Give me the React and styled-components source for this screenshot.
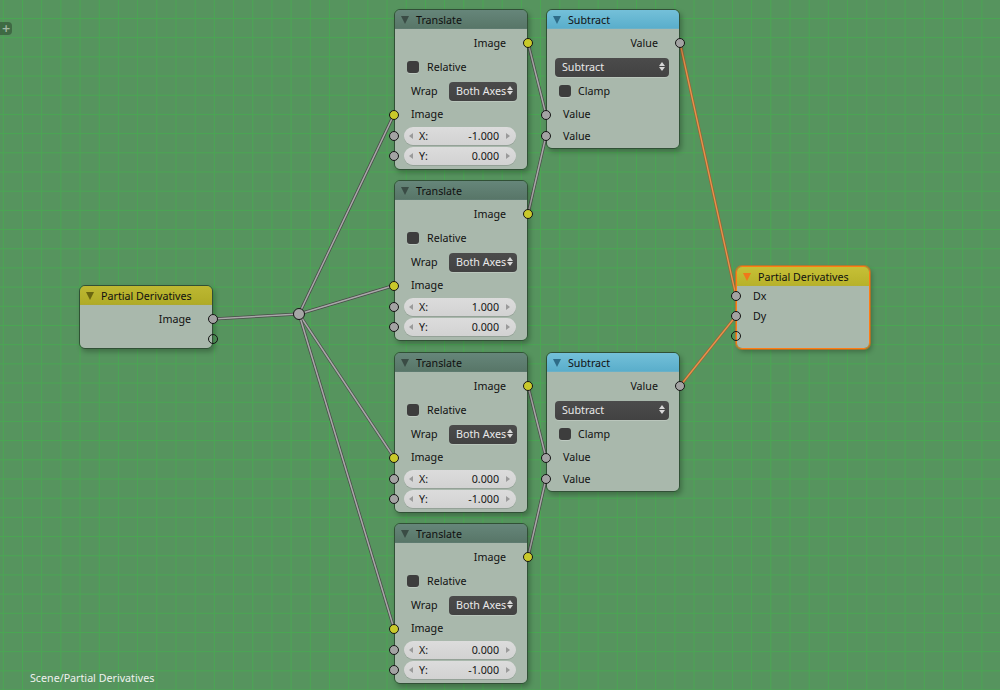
import React from "react";
import styled, { createGlobalStyle } from "styled-components";

const GlobalStyle = createGlobalStyle`
  html, body {
    margin: 0;
    padding: 0;
    background: #579560;
  }
  body {
    font-family: "Noto Sans", "DejaVu Sans", sans-serif;
  }
`;

const Canvas = styled.div`
  position: relative;
  width: 1000px;
  height: 690px;
  overflow: hidden;
  background-color: #56945e;
  background-image: linear-gradient(to right, #4aa653 1px, transparent 1px),
    linear-gradient(to bottom, #4aa653 1px, transparent 1px);
  background-size: 19.2px 19.2px;
  background-position: 22px 18px;
  font-family: "Noto Sans", "DejaVu Sans", sans-serif;
  font-size: 10.7px;
  color: #111;
`;

const Wires = styled.svg`
  position: absolute;
  left: 0;
  top: 0;
`;

const AddTab = styled.div`
  position: absolute;
  left: 0;
  top: 22px;
  width: 12px;
  height: 13px;
  border-radius: 0 4px 4px 0;
  background: rgba(45, 70, 48, 0.55);
  color: #a3b8a5;
  font-family: "DejaVu Sans", sans-serif;
  font-size: 11px;
  font-weight: bold;
  line-height: 13px;
  text-align: center;
`;

const SceneLabel = styled.div`
  position: absolute;
  left: 30px;
  top: 671px;
  color: #eef2ee;
`;

/* ---------- node parts ---------- */

const tones = {
  translate: { bg: "linear-gradient(#66867a, #587668)", tri: "#3a4c45" },
  subtract: { bg: "linear-gradient(#74c0d9, #5aaecb)", tri: "#2e6c88" },
  output: { bg: "linear-gradient(#bdb832, #b0ab26)", tri: "#6a6610" },
  active: { bg: "linear-gradient(#c6c036, #b8b22a)", tri: "#f0781a" },
};

const NodeBox = styled.div`
  position: absolute;
  left: ${(p) => p.$x}px;
  top: ${(p) => p.$y}px;
  width: 134px;
  box-sizing: border-box;
  display: flex;
  flex-direction: column;
  border: 1px solid ${(p) => (p.$active ? "#ff7c14" : "rgba(25, 35, 28, 0.6)")};
  border-radius: 6px;
  box-shadow: ${(p) =>
    p.$active
      ? "0 0 0 1px rgba(235, 110, 20, 0.6), 2px 3px 5px rgba(0,0,0,0.25)"
      : "2px 3px 5px rgba(0, 0, 0, 0.25)"};
`;

const Header = styled.div`
  height: 19px;
  display: flex;
  align-items: center;
  gap: 7px;
  padding: 1px 0 0 6px;
  border-radius: 5px 5px 0 0;
  background: ${(p) => tones[p.$tone].bg};
  color: #101010;
  border-bottom: 1px solid rgba(0, 0, 0, 0.08);
  box-sizing: border-box;
`;

const Collapse = styled.span`
  width: 0;
  height: 0;
  border-left: 4px solid transparent;
  border-right: 4px solid transparent;
  border-top: 8px solid ${(p) => tones[p.$tone].tri};
`;

const Body = styled.div`
  background: #a9b8ac;
  border-radius: 0 0 5px 5px;
  padding-top: ${(p) => p.$pt || 0}px;
  padding-bottom: ${(p) => p.$pb || 0}px;
`;

const Row = styled.div`
  position: relative;
  height: ${(p) => p.$h}px;
  display: flex;
  align-items: center;
  justify-content: ${(p) => (p.$out ? "flex-end" : "flex-start")};
  padding: 0 ${(p) => (p.$out ? 21 : 0)}px 1px ${(p) => (p.$out ? 0 : 16)}px;
  box-sizing: border-box;
`;

const ControlRow = styled.div`
  position: relative;
  height: ${(p) => p.$h}px;
  display: flex;
  align-items: center;
  padding: 0 ${(p) => p.$pr}px 0 ${(p) => p.$pl}px;
`;

const socketFill = {
  image: "#c9c92a",
  value: "#a3a3a3",
  empty: "transparent",
};

const Socket = styled.span`
  position: absolute;
  top: 50%;
  ${(p) => (p.$side === "right" ? "right: -6px;" : "left: -6px;")}
  width: 10px;
  height: 10px;
  margin-top: -5px;
  box-sizing: border-box;
  border-radius: 50%;
  border: 1px solid #141414;
  background: ${(p) => socketFill[p.$kind]};
`;

const Check = styled.span`
  width: 12px;
  height: 12px;
  border-radius: 3px;
  background: #3d3d3d;
  box-shadow: 0 1px 0 rgba(255, 255, 255, 0.25);
  margin-right: ${(p) => p.$gap}px;
`;

const Menu = styled.div`
  height: 19px;
  width: ${(p) => (p.$w ? `${p.$w}px` : "auto")};
  flex: ${(p) => (p.$w ? "none" : 1)};
  margin-left: auto;
  box-sizing: border-box;
  display: flex;
  align-items: center;
  padding: 0 4px 1px 7px;
  border-radius: 4px;
  background: linear-gradient(#4b4b4b, #424242);
  box-shadow: 0 1px 0 rgba(255, 255, 255, 0.2);
  color: #e9e9e9;
  white-space: nowrap;
`;

const MenuArrows = styled.span`
  margin-left: auto;
  display: flex;
  flex-direction: column;
  gap: 1px;
  &::before,
  &::after {
    content: "";
    width: 0;
    height: 0;
    border-left: 3px solid transparent;
    border-right: 3px solid transparent;
  }
  &::before {
    border-bottom: 4px solid #d8d8d8;
  }
  &::after {
    border-top: 4px solid #d8d8d8;
  }
`;

const Field = styled.div`
  flex: 1;
  height: 18px;
  box-sizing: border-box;
  display: flex;
  align-items: center;
  padding: 0 6px 1px 5px;
  border-radius: 9px;
  background: linear-gradient(#dcdcdc, #d2d2d2);
  box-shadow: 0 1px 0 rgba(0, 0, 0, 0.12);
  color: #151515;
`;

const Nudge = styled.span`
  width: 0;
  height: 0;
  border-top: 3px solid transparent;
  border-bottom: 3px solid transparent;
  ${(p) =>
    p.$dir === "left"
      ? "border-right: 4px solid #9a9a9a; margin-right: 6px;"
      : "border-left: 4px solid #9a9a9a; margin-left: 7px;"}
`;

const FieldValue = styled.span`
  margin-left: auto;
`;

/* ---------- nodes ---------- */

function NumberRow({ axis, value }) {
  return (
    <ControlRow $h={20} $pl={9} $pr={11}>
      <Socket $side="left" $kind="value" />
      <Field>
        <Nudge $dir="left" />
        {axis}:
        <FieldValue>{value}</FieldValue>
        <Nudge $dir="right" />
      </Field>
    </ControlRow>
  );
}

function TranslateNode({ x, y, dx, dy }) {
  return (
    <NodeBox $x={x} $y={y}>
      <Header $tone="translate">
        <Collapse $tone="translate" />
        Translate
      </Header>
      <Body $pt={2} $pb={3}>
        <Row $h={24} $out>
          Image
          <Socket $side="right" $kind="image" />
        </Row>
        <ControlRow $h={24} $pl={12} $pr={10}>
          <Check $gap={8} />
          Relative
        </ControlRow>
        <ControlRow $h={24} $pl={16} $pr={10}>
          Wrap
          <Menu $w={68}>
            Both Axes
            <MenuArrows />
          </Menu>
        </ControlRow>
        <Row $h={23}>
          Image
          <Socket $side="left" $kind="image" />
        </Row>
        <NumberRow axis="X" value={dx} />
        <NumberRow axis="Y" value={dy} />
      </Body>
    </NodeBox>
  );
}

function SubtractNode({ x, y }) {
  return (
    <NodeBox $x={x} $y={y}>
      <Header $tone="subtract">
        <Collapse $tone="subtract" />
        Subtract
      </Header>
      <Body $pt={2} $pb={2}>
        <Row $h={24} $out>
          Value
          <Socket $side="right" $kind="value" />
        </Row>
        <ControlRow $h={24} $pl={8} $pr={10}>
          <Menu>
            Subtract
            <MenuArrows />
          </Menu>
        </ControlRow>
        <ControlRow $h={24} $pl={12} $pr={10}>
          <Check $gap={7} />
          Clamp
        </ControlRow>
        <Row $h={23}>
          Value
          <Socket $side="left" $kind="value" />
        </Row>
        <Row $h={20}>
          Value
          <Socket $side="left" $kind="value" />
        </Row>
      </Body>
    </NodeBox>
  );
}

/* ---------- links ---------- */

const links = [
  [213, 319, 299, 314],
  [299, 314, 394, 114.5],
  [299, 314, 394, 285.5],
  [299, 314, 394, 457.5],
  [299, 314, 394, 628.5],
  [528, 43, 546, 114.5],
  [528, 214, 546, 136],
  [528, 386, 546, 457.5],
  [528, 557, 546, 479],
];

const activeLinks = [
  [680, 43, 736, 296],
  [680, 386, 736, 316],
];

function Links() {
  return (
    <Wires width="1000" height="690" viewBox="0 0 1000 690">
      {links.map(([x1, y1, x2, y2], i) => (
        <g key={i}>
          <line x1={x1} y1={y1} x2={x2} y2={y2} stroke="#4a4a4a" strokeWidth="3" />
          <line x1={x1} y1={y1} x2={x2} y2={y2} stroke="#a9a9a9" strokeWidth="1.5" />
        </g>
      ))}
      {activeLinks.map(([x1, y1, x2, y2], i) => (
        <g key={"a" + i}>
          <line x1={x1} y1={y1} x2={x2} y2={y2} stroke="#9a6434" strokeWidth="2.8" />
          <line x1={x1} y1={y1} x2={x2} y2={y2} stroke="#e8944e" strokeWidth="1.3" />
        </g>
      ))}
      <circle cx="299" cy="314" r="5.5" fill="#a6a6a6" stroke="#141414" strokeWidth="1" />
    </Wires>
  );
}

export default function App() {
  return (
    <>
      <GlobalStyle />
      <Canvas>
        <Links />
        <AddTab>+</AddTab>

        <NodeBox $x={79} $y={285}>
          <Header $tone="output">
            <Collapse $tone="output" />
            Partial Derivatives
          </Header>
          <Body $pt={2} $pb={1}>
            <Row $h={24} $out>
              Image
              <Socket $side="right" $kind="value" />
            </Row>
            <Row $h={16} $out>
              <Socket $side="right" $kind="empty" />
            </Row>
          </Body>
        </NodeBox>

        <TranslateNode x={394} y={9} dx="-1.000" dy="0.000" />
        <TranslateNode x={394} y={180} dx="1.000" dy="0.000" />
        <TranslateNode x={394} y={352} dx="0.000" dy="-1.000" />
        <TranslateNode x={394} y={523} dx="0.000" dy="-1.000" />

        <SubtractNode x={546} y={9} />
        <SubtractNode x={546} y={352} />

        <NodeBox $x={736} $y={266} $active>
          <Header $tone="active">
            <Collapse $tone="active" />
            Partial Derivatives
          </Header>
          <Body $pt={0} $pb={3}>
            <Row $h={20}>
              Dx
              <Socket $side="left" $kind="value" />
            </Row>
            <Row $h={20}>
              Dy
              <Socket $side="left" $kind="value" />
            </Row>
            <Row $h={19}>
              <Socket $side="left" $kind="empty" />
            </Row>
          </Body>
        </NodeBox>

        <SceneLabel>Scene/Partial Derivatives</SceneLabel>
      </Canvas>
    </>
  );
}
